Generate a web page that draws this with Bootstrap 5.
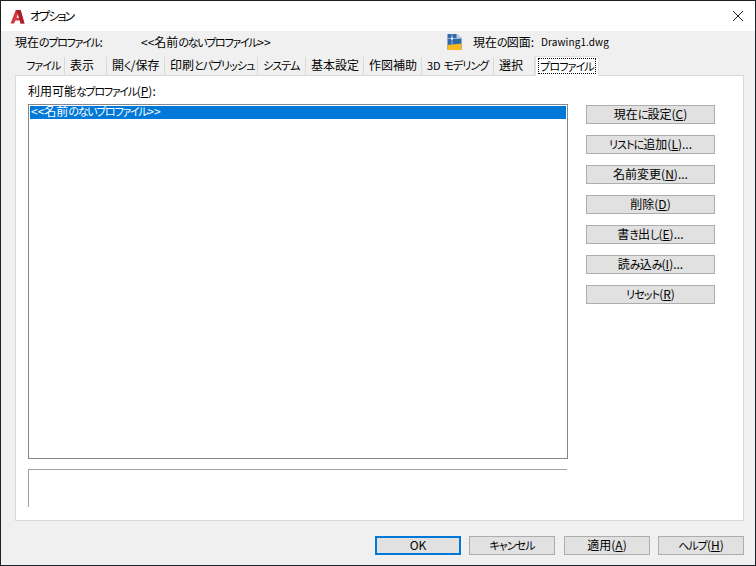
<!DOCTYPE html>
<html lang="ja">
<head>
<meta charset="utf-8">
<title>オプション</title>
<link rel="stylesheet" href="https://cdn.jsdelivr.net/npm/bootstrap@5.3.0/dist/css/bootstrap.min.css">
<style>
html,body{margin:0;height:100%;background:#f0f0f0}
body{font-family:"Noto Sans CJK JP","Liberation Sans",sans-serif;font-size:12px;line-height:16px;color:#000;font-feature-settings:"palt";overflow:hidden}
.kn{font-size:11px;letter-spacing:-.9px}
.kn2{font-size:11px;letter-spacing:-1.3px}
.kn3{font-size:12px;letter-spacing:-1.9px}
.lat{font-size:11px}
.dlg-window{width:756px;height:566px;border:1px solid #1b2024;background:#f0f0f0}
.dlg-title{height:30px;background:#fff;padding:0 9px 0 9px;gap:6px}
.dlg-logo{width:15px;height:15px;margin-right:5px}
.dlg-close{width:14px;height:14px;margin-right:1px}
.dlg-info{height:25px;padding:0 0 3px 14px}
.dlg-info-label{width:126px}
.dlg-info-name{width:306px}
.dlg-info-icon{width:15px;height:16px;margin-right:11px}
.dlg-info-value{margin-left:7px;font-size:10px;letter-spacing:.1px}
.dlg-tabs{margin-left:16px;height:19px;border:0;flex-wrap:nowrap;align-items:flex-end}
.nav-tabs .dlg-tab{height:18px;padding:0 0 0 5px;margin:0;border:0;border-right:1px solid #d9d9d9;background:#f0f0f0;color:#000;text-align:left;border-radius:0;line-height:16px;white-space:nowrap}
.nav-tabs .dlg-tab-first{padding-left:9px}
.nav-tabs .dlg-tab-on{height:20px;width:64px;background:#fff;border:1px solid #d9d9d9;border-bottom:0;padding:1px 2px 0;position:relative;z-index:1;margin-bottom:-1px;text-align:center}
.dlg-tab-on>span{display:block;border:1px dotted #000;line-height:14px;height:16px}
.nav-tabs .w-41{width:41px}.nav-tabs .w-42{width:42px}.nav-tabs .w-48{width:48px}.nav-tabs .w-58{width:58px}.nav-tabs .w-72{width:72px}.nav-tabs .w-93{width:93px}
.dlg-panel{width:729px;height:446px;margin-left:14px;background:#fff;border:1px solid #d9d9d9;padding:7px 12px 0;gap:18px}
.dlg-left{width:540px}
.dlg-label{height:21px}
.dlg-list{height:355px;border:1px solid #828790;border-radius:0;padding:1px}
.list-group-item.dlg-item{height:13px;line-height:10px;background:#0078d7;color:#fff;border:0;border-radius:0;padding:0 1px}
.dlg-desc{height:38px;margin-top:10px;width:539px;border-top:1px solid #a0a0a0;border-left:1px solid #a0a0a0}
.dlg-side{width:129px;padding-top:22px;gap:11px}
.dlg-btn{background:#e1e1e1;border:1px solid #adadad;border-radius:0;color:#000;font-size:12px;line-height:15px;padding:0 0 2px;height:19px;width:129px;font-feature-settings:"palt"}
.dlg-btn:hover{background:#e1e1e1;border-color:#adadad;color:#000}
.dlg-foot{padding:15px 11px 0 374px}
.dlg-foot .dlg-btn{width:86px}
.dlg-gap1{margin-left:8px}
.dlg-gap2{margin-left:9px}
.dlg-default{border:2px solid #0078d7;line-height:14px;padding-bottom:1px}
.dlg-default:hover{border-color:#0078d7}
</style>
</head>
<body>
<div class="dlg-window d-flex flex-column">
  <div class="dlg-title d-flex align-items-center justify-content-between">
    <div class="d-flex align-items-center">
      <svg class="dlg-logo" viewBox="0 0 15 15"><path d="M0.5 14.5 L5.8 1 H10.6 L14.5 14.5 H10.6 L9.8 11.6 H5.4 L6.5 8.8 H9 L8 5 L4.2 14.5 Z" fill="#cf3a3f"/><path d="M5.8 1 H10.6 L14.5 14.5 H10.6 L8 5 Z" fill="#ad1f28"/></svg>
      <span class="kn3">オプション</span>
    </div>
    <svg class="dlg-close" viewBox="0 0 14 14"><path d="M2 2 L12 12 M12 2 L2 12" stroke="#222" stroke-width="1" fill="none"/></svg>
  </div>
  <div class="dlg-info d-flex align-items-center">
    <span class="dlg-info-label">現在<span class="kn2">のプロファイル</span>:</span>
    <span class="dlg-info-name">&lt;&lt;名前<span class="kn2">のないプロファイル</span>&gt;&gt;</span>
    <svg class="dlg-info-icon" viewBox="0 0 14 16"><path d="M0 0 H9 L14 4 V16 H0 Z" fill="#2f68a8"/><path d="M9 0 L14 4 H9 Z" fill="#c3d3e6"/><path d="M0 16 V11 L14 9.5 V16 Z" fill="#f6b91f"/><path d="M4.5 0 V11 M0 4.5 H14" stroke="#8fb3d8" stroke-width="1"/><rect x="3.5" y="3.5" width="2" height="2" fill="#fff"/></svg>
    <span>現在<span class="kn">の</span>図面:</span>
    <span class="dlg-info-value">Drawing1.dwg</span>
  </div>
  <ul class="nav nav-tabs dlg-tabs">
    <li class="nav-item"><a class="nav-link dlg-tab dlg-tab-first w-48" href="#"><span class="kn">ファイル</span></a></li>
    <li class="nav-item"><a class="nav-link dlg-tab w-42" href="#">表示</a></li>
    <li class="nav-item"><a class="nav-link dlg-tab w-58" href="#">開<span class="kn">く</span>/保存</a></li>
    <li class="nav-item"><a class="nav-link dlg-tab w-93" href="#">印刷<span class="kn">とパブリッシュ</span></a></li>
    <li class="nav-item"><a class="nav-link dlg-tab w-48" href="#"><span class="kn">システム</span></a></li>
    <li class="nav-item"><a class="nav-link dlg-tab w-58" href="#">基本設定</a></li>
    <li class="nav-item"><a class="nav-link dlg-tab w-58" href="#">作図補助</a></li>
    <li class="nav-item"><a class="nav-link dlg-tab w-72" href="#"><span class="lat">3D</span> <span class="kn">モデリング</span></a></li>
    <li class="nav-item"><a class="nav-link dlg-tab w-41" href="#">選択</a></li>
    <li class="nav-item"><a class="nav-link dlg-tab dlg-tab-on active" href="#"><span><span class="kn">プロファイル</span></span></a></li>
  </ul>
  <div class="dlg-panel d-flex">
    <div class="dlg-left d-flex flex-column">
      <div class="dlg-label">利用可能<span class="kn2">なプロファイル</span>(<u>P</u>):</div>
      <div class="list-group dlg-list">
        <div class="list-group-item dlg-item active">&lt;&lt;名前<span class="kn2">のないプロファイル</span>&gt;&gt;</div>
      </div>
      <div class="dlg-desc"></div>
    </div>
    <div class="dlg-side d-flex flex-column">
      <button type="button" class="btn dlg-btn">現在<span class="kn">に</span>設定(<u>C</u>)</button>
      <button type="button" class="btn dlg-btn"><span class="kn">リストに</span>追加(<u>L</u>)...</button>
      <button type="button" class="btn dlg-btn">名前変更(<u>N</u>)...</button>
      <button type="button" class="btn dlg-btn">削除(<u>D</u>)</button>
      <button type="button" class="btn dlg-btn">書<span class="kn">き</span>出<span class="kn">し</span>(<u>E</u>)...</button>
      <button type="button" class="btn dlg-btn">読<span class="kn">み</span>込<span class="kn">み</span>(<u>I</u>)...</button>
      <button type="button" class="btn dlg-btn"><span class="kn">リセット</span>(<u>R</u>)</button>
    </div>
  </div>
  <div class="dlg-foot d-flex">
    <button type="button" class="btn dlg-btn dlg-default">OK</button>
    <button type="button" class="btn dlg-btn dlg-gap1"><span class="kn">キャンセル</span></button>
    <button type="button" class="btn dlg-btn dlg-gap2">適用(<u>A</u>)</button>
    <button type="button" class="btn dlg-btn dlg-gap1"><span class="kn">ヘルプ</span>(<u>H</u>)</button>
  </div>
</div>
<script src="https://cdn.jsdelivr.net/npm/bootstrap@5.3.0/dist/js/bootstrap.bundle.min.js"></script>
</body>
</html>
